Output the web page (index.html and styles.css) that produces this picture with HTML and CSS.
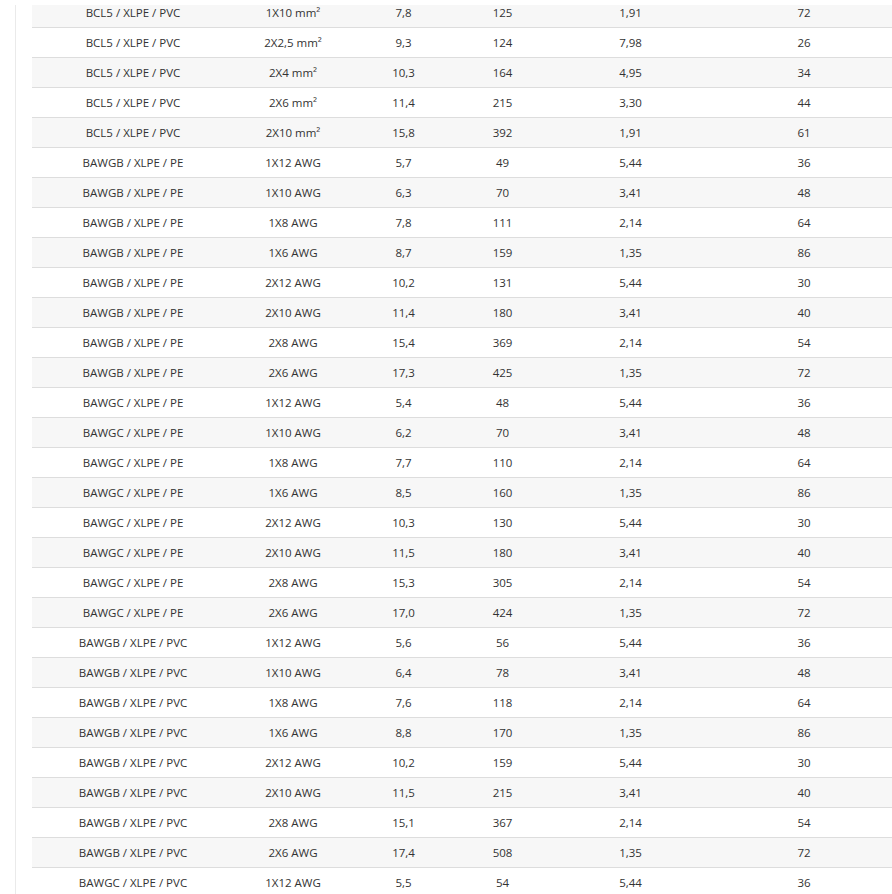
FILE: index.html
```html
<!DOCTYPE html>
<html>
<head>
<meta charset="utf-8">
<link rel="stylesheet" href="styles.css">
</head>
<body>
<div class="page">
  <div class="rail"></div>
  <div class="main">
    <table class="spec">
      <colgroup>
        <col class="c1"><col class="c2"><col class="c3"><col class="c4"><col class="c5"><col class="c6">
      </colgroup>
      <tbody>
        <tr><td>BCL5 / XLPE / PVC</td><td>1X10 mm²</td><td>7,8</td><td>125</td><td>1,91</td><td>72</td></tr>
        <tr><td>BCL5 / XLPE / PVC</td><td>2X2,5 mm²</td><td>9,3</td><td>124</td><td>7,98</td><td>26</td></tr>
        <tr><td>BCL5 / XLPE / PVC</td><td>2X4 mm²</td><td>10,3</td><td>164</td><td>4,95</td><td>34</td></tr>
        <tr><td>BCL5 / XLPE / PVC</td><td>2X6 mm²</td><td>11,4</td><td>215</td><td>3,30</td><td>44</td></tr>
        <tr><td>BCL5 / XLPE / PVC</td><td>2X10 mm²</td><td>15,8</td><td>392</td><td>1,91</td><td>61</td></tr>
        <tr><td>BAWGB / XLPE / PE</td><td>1X12 AWG</td><td>5,7</td><td>49</td><td>5,44</td><td>36</td></tr>
        <tr><td>BAWGB / XLPE / PE</td><td>1X10 AWG</td><td>6,3</td><td>70</td><td>3,41</td><td>48</td></tr>
        <tr><td>BAWGB / XLPE / PE</td><td>1X8 AWG</td><td>7,8</td><td>111</td><td>2,14</td><td>64</td></tr>
        <tr><td>BAWGB / XLPE / PE</td><td>1X6 AWG</td><td>8,7</td><td>159</td><td>1,35</td><td>86</td></tr>
        <tr><td>BAWGB / XLPE / PE</td><td>2X12 AWG</td><td>10,2</td><td>131</td><td>5,44</td><td>30</td></tr>
        <tr><td>BAWGB / XLPE / PE</td><td>2X10 AWG</td><td>11,4</td><td>180</td><td>3,41</td><td>40</td></tr>
        <tr><td>BAWGB / XLPE / PE</td><td>2X8 AWG</td><td>15,4</td><td>369</td><td>2,14</td><td>54</td></tr>
        <tr><td>BAWGB / XLPE / PE</td><td>2X6 AWG</td><td>17,3</td><td>425</td><td>1,35</td><td>72</td></tr>
        <tr><td>BAWGC / XLPE / PE</td><td>1X12 AWG</td><td>5,4</td><td>48</td><td>5,44</td><td>36</td></tr>
        <tr><td>BAWGC / XLPE / PE</td><td>1X10 AWG</td><td>6,2</td><td>70</td><td>3,41</td><td>48</td></tr>
        <tr><td>BAWGC / XLPE / PE</td><td>1X8 AWG</td><td>7,7</td><td>110</td><td>2,14</td><td>64</td></tr>
        <tr><td>BAWGC / XLPE / PE</td><td>1X6 AWG</td><td>8,5</td><td>160</td><td>1,35</td><td>86</td></tr>
        <tr><td>BAWGC / XLPE / PE</td><td>2X12 AWG</td><td>10,3</td><td>130</td><td>5,44</td><td>30</td></tr>
        <tr><td>BAWGC / XLPE / PE</td><td>2X10 AWG</td><td>11,5</td><td>180</td><td>3,41</td><td>40</td></tr>
        <tr><td>BAWGC / XLPE / PE</td><td>2X8 AWG</td><td>15,3</td><td>305</td><td>2,14</td><td>54</td></tr>
        <tr><td>BAWGC / XLPE / PE</td><td>2X6 AWG</td><td>17,0</td><td>424</td><td>1,35</td><td>72</td></tr>
        <tr><td>BAWGB / XLPE / PVC</td><td>1X12 AWG</td><td>5,6</td><td>56</td><td>5,44</td><td>36</td></tr>
        <tr><td>BAWGB / XLPE / PVC</td><td>1X10 AWG</td><td>6,4</td><td>78</td><td>3,41</td><td>48</td></tr>
        <tr><td>BAWGB / XLPE / PVC</td><td>1X8 AWG</td><td>7,6</td><td>118</td><td>2,14</td><td>64</td></tr>
        <tr><td>BAWGB / XLPE / PVC</td><td>1X6 AWG</td><td>8,8</td><td>170</td><td>1,35</td><td>86</td></tr>
        <tr><td>BAWGB / XLPE / PVC</td><td>2X12 AWG</td><td>10,2</td><td>159</td><td>5,44</td><td>30</td></tr>
        <tr><td>BAWGB / XLPE / PVC</td><td>2X10 AWG</td><td>11,5</td><td>215</td><td>3,41</td><td>40</td></tr>
        <tr><td>BAWGB / XLPE / PVC</td><td>2X8 AWG</td><td>15,1</td><td>367</td><td>2,14</td><td>54</td></tr>
        <tr><td>BAWGB / XLPE / PVC</td><td>2X6 AWG</td><td>17,4</td><td>508</td><td>1,35</td><td>72</td></tr>
        <tr><td>BAWGC / XLPE / PVC</td><td>1X12 AWG</td><td>5,5</td><td>54</td><td>5,44</td><td>36</td></tr>
      </tbody>
    </table>
  </div>
</div>
</body>
</html>
```
FILE: styles.css
```css
html, body {
  margin: 0;
  padding: 0;
  background: #fff;
  overflow: hidden;
}
body {
  padding-top: 5px;
  font-family: "Open Sans", "Liberation Sans", sans-serif;
  font-size: 11.5px;
  color: #333;
}
.page {
  display: flex;
  height: 889px;
  overflow: hidden;
}
.rail {
  flex: 0 0 15px;
  border-right: 1px solid #eaeaea;
}
.main {
  flex: 1;
  min-width: 0;
  overflow: hidden;
  padding-left: 16px;
}
.spec {
  margin-top: -7px;
  width: 865px;
  table-layout: fixed;
  border-collapse: collapse;
  border-spacing: 0;
}
.c1 { width: 202px; }
.c2 { width: 118px; }
.c3 { width: 103px; }
.c4 { width: 95px; }
.c5 { width: 161px; }
.c6 { width: 186px; }
.spec td {
  height: 29px;
  padding: 0;
  text-align: center;
  vertical-align: middle;
  border-bottom: 1px solid #dddddd;
  white-space: nowrap;
  line-height: 15px;
}
.spec tr:nth-child(odd) td {
  background: #f7f7f7;
}
```
